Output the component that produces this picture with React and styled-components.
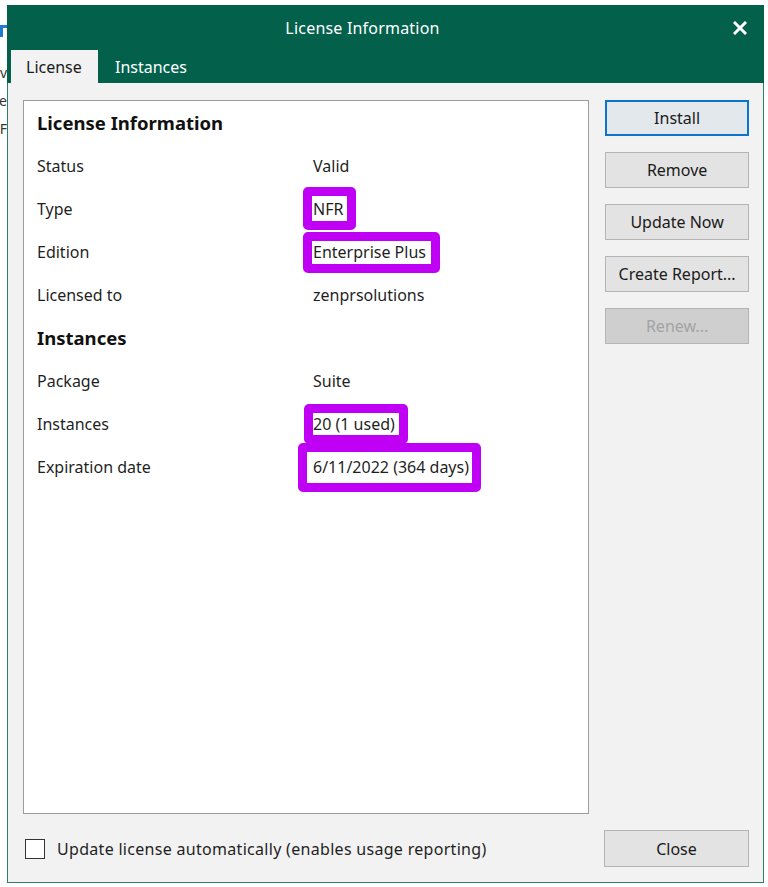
import styled, { createGlobalStyle } from 'styled-components';

const GlobalStyle = createGlobalStyle`
    html, body {
        margin: 0;
        padding: 0;
        background: #ffffff;
    }
    body {
        font-family: 'Noto Sans', 'Open Sans', sans-serif;
        color: #1a1a1a;
    }
`;

const Page = styled.div`
    display: flex;
    align-items: flex-start;
    width: 768px;
    height: 887px;
    padding-top: 5px;
    box-sizing: border-box;
    overflow: hidden;
`;

const Backdrop = styled.div`
    width: 7px;
    flex-shrink: 0;
    overflow: hidden;
    display: flex;
    flex-direction: column;
    align-items: flex-end;
    padding-top: 20px;
    font-size: 14px;
    color: #333;
    white-space: nowrap;
`;

const BackdropArrow = styled.div`
    width: 7px;
    height: 12px;
    border-top: 3px solid #1f7ad1;
    border-left: 3px solid #1f7ad1;
    box-sizing: border-box;
    margin-bottom: 22px;
`;

const BackdropLine = styled.div`
    line-height: 28px;
`;

const Dialog = styled.div`
    width: 757px;
    height: 878px;
    box-sizing: border-box;
    border: 1px solid #2f7f68;
    border-top: none;
    background: #f2f2f2;
    display: flex;
    flex-direction: column;
`;

const Header = styled.div`
    background: #03614b;
    height: 78px;
    display: flex;
    flex-direction: column;
    margin: 0 -1px;
`;

const TitleRow = styled.div`
    height: 45px;
    display: flex;
    align-items: center;
`;

const Title = styled.div`
    flex: 1;
    text-align: center;
    color: #ffffff;
    font-size: 16px;
    letter-spacing: 0.2px;
`;

const CloseX = styled.div`
    width: 44px;
    height: 45px;
    display: flex;
    align-items: center;
    justify-content: center;
    padding-right: 2px;
`;

const Tabs = styled.div`
    display: flex;
    align-items: flex-end;
    height: 33px;
    padding-left: 4px;
`;

const Tab = styled.div`
    height: 33px;
    display: flex;
    align-items: center;
    box-sizing: border-box;
    font-size: 16px;
    padding: 0 14px 0 15px;
    width: ${p => (p.active ? '87px' : 'auto')};
    background: ${p => (p.active ? '#f2f2f2' : 'transparent')};
    color: ${p => (p.active ? '#1a1a1a' : '#ffffff')};
    margin-right: ${p => (p.active ? '2px' : '0')};
`;

const Body = styled.div`
    flex: 1;
    display: flex;
    flex-direction: column;
    padding: 17px 14px 0 15px;
`;

const Main = styled.div`
    display: flex;
    gap: 16px;
`;

const Panel = styled.div`
    width: 567px;
    height: 714px;
    box-sizing: border-box;
    border: 1px solid #9c9c9c;
    background: #ffffff;
    padding: 0 0 0 13px;
`;

const InfoGrid = styled.div`
    display: grid;
    grid-template-columns: 276px 1fr;
    grid-auto-rows: 43px;
    align-items: center;
    font-size: 16px;
`;

const SectionTitle = styled.div`
    grid-column: 1 / 3;
    font-size: 18.5px;
    font-weight: 700;
    color: #111;
`;

const Label = styled.div`
    color: #1f1f1f;
`;

const Value = styled.div`
    color: #1f1f1f;
`;

const Mark = styled.span`
    display: inline-block;
    border: 9px solid #bf00f4;
    border-radius: 5px;
    background: #ffffff;
    line-height: 20px;
    padding: ${p => p.pad};
    margin: ${p => p.off};
`;

const ButtonColumn = styled.div`
    display: flex;
    flex-direction: column;
    gap: 16px;
    width: 144px;
`;

const Button = styled.div`
    height: 36px;
    box-sizing: border-box;
    display: flex;
    align-items: center;
    justify-content: center;
    font-size: 16px;
    border: ${p => (p.focused ? '2px solid #0a74cf' : '1px solid #b4b4b4')};
    background: ${p => (p.disabled ? '#cfcfcf' : p.focused ? '#e3e8ec' : '#e3e3e3')};
    color: ${p => (p.disabled ? '#a3a3a3' : '#1a1a1a')};
`;

const Footer = styled.div`
    display: flex;
    align-items: center;
    justify-content: space-between;
    margin-top: 16px;
    padding-left: 2px;
`;

const CheckRow = styled.label`
    display: flex;
    align-items: center;
    gap: 12px;
    font-size: 16px;
    letter-spacing: 0.3px;
    color: #1f1f1f;
`;

const CheckBox = styled.span`
    width: 20px;
    height: 20px;
    box-sizing: border-box;
    border: 1px solid #333;
    background: #fff;
`;

const FooterButton = styled(Button)`
    width: 145px;
    height: 37px;
`;

const rows = [
    { section: 'License Information' },
    { label: 'Status', value: 'Valid' },
    { label: 'Type', value: 'NFR', pad: '3px 4px 2px 1px', off: '-12px 0 -11px -10px' },
    { label: 'Edition', value: 'Enterprise Plus', pad: '1px 5px 2px 1px', off: '-10px 0 -11px -10px' },
    { label: 'Licensed to', value: 'zenprsolutions' },
    { section: 'Instances' },
    { label: 'Package', value: 'Suite' },
    { label: 'Instances', value: '20 (1 used)', pad: '1px 4px 1px 0', off: '-10px 0 -10px -9px' },
    { label: 'Expiration date', value: '6/11/2022 (364 days)', pad: '5px 3px 6px 6px', off: '-14px 0 -15px -15px' },
];

const App = () => {
    return (
        <Page>
            <GlobalStyle />
            <Backdrop>
                <BackdropArrow />
                <BackdropLine>v</BackdropLine>
                <BackdropLine>ve</BackdropLine>
                <BackdropLine>BF</BackdropLine>
            </Backdrop>
            <Dialog>
                <Header>
                    <TitleRow>
                        <Title>License Information</Title>
                        <CloseX>
                            <svg width="14" height="14" viewBox="0 0 14 14">
                                <path d="M2 2 L12 12 M12 2 L2 12" stroke="#fff" strokeWidth="3" strokeLinecap="square" />
                            </svg>
                        </CloseX>
                    </TitleRow>
                    <Tabs>
                        <Tab active>License</Tab>
                        <Tab>Instances</Tab>
                    </Tabs>
                </Header>
                <Body>
                    <Main>
                        <Panel>
                            <InfoGrid>
                                {rows.map((r, i) =>
                                    r.section ? (
                                        <SectionTitle key={i}>{r.section}</SectionTitle>
                                    ) : (
                                        [
                                            <Label key={i + 'l'}>{r.label}</Label>,
                                            <Value key={i + 'v'}>
                                                {r.pad ? (
                                                    <Mark pad={r.pad} off={r.off}>{r.value}</Mark>
                                                ) : (
                                                    r.value
                                                )}
                                            </Value>,
                                        ]
                                    )
                                )}
                            </InfoGrid>
                        </Panel>
                        <ButtonColumn>
                            <Button focused>Install</Button>
                            <Button>Remove</Button>
                            <Button>Update Now</Button>
                            <Button>Create Report...</Button>
                            <Button disabled>Renew...</Button>
                        </ButtonColumn>
                    </Main>
                    <Footer>
                        <CheckRow>
                            <CheckBox />
                            Update license automatically (enables usage reporting)
                        </CheckRow>
                        <FooterButton>Close</FooterButton>
                    </Footer>
                </Body>
            </Dialog>
        </Page>
    );
};

export default App;
